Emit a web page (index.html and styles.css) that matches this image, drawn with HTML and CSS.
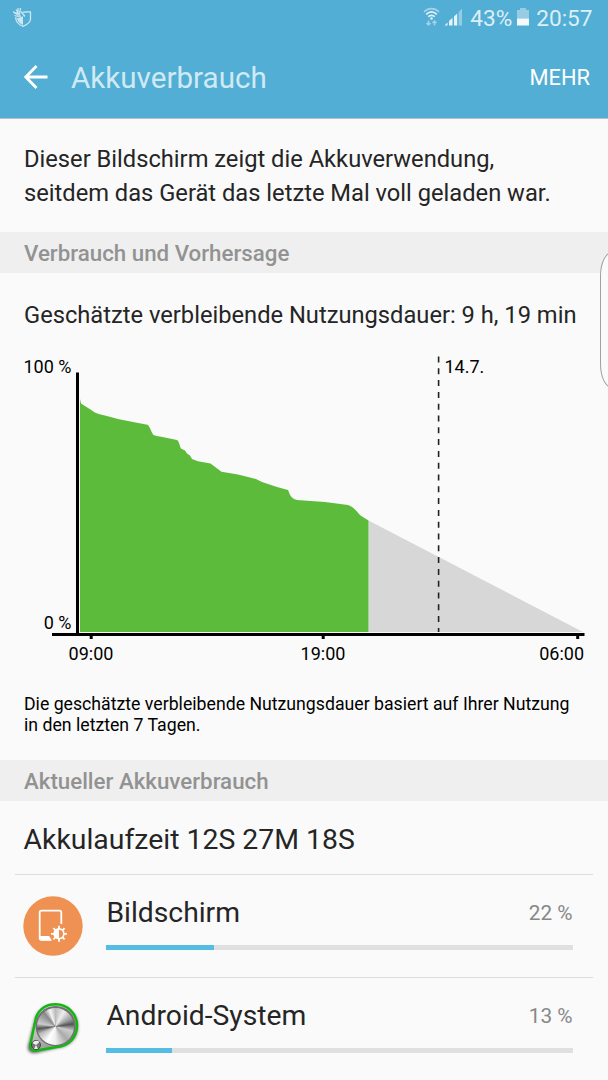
FILE: index.html
```
<!DOCTYPE html>
<html lang="de">
<head>
  <meta charset="UTF-8">
  <meta name="viewport" content="width=device-width, initial-scale=1.0">
  <title>Akkuverbrauch</title>
  <link rel="stylesheet" href="styles.css">
</head>
<body>
  <div class="screen">
    <header class="header">
      <div class="status-bar">
        <svg class="shield-icon" width="20" height="20" viewBox="0 0 20 20" fill="none" stroke="#cbe7f2">
          <path d="M10 4.2C12.500 4.200 15 3.500 17.500 4V11C17.300 14.500 14 16.800 10 18.300C6 16.800 3.200 14.500 2.800 10.500V9" stroke-width="1.300"/>
          <path d="M4 10H7L10 8V17C6.500 15.500 4.300 13.500 4 10Z" fill="#cbe7f2" stroke="none"/>
          <path d="M0 3.500L5.500 7.500M3 1.500L7.500 8.500M7.500 0L6.500 6M1.500 7.500L8.500 9.500M8 3.500L12 8.500M1 5H5M5 0V4" stroke-width="1.300"/>
        </svg>
        <div class="status-right">
          <svg class="wifi-icon" width="18" height="20" viewBox="0 0 18 20" fill="none" stroke="#e3f2f8">
            <path d="M1 4.800C5.500 .6 11.500 .6 16 4.800" stroke="#a4d3e7" stroke-width="1.600"/>
            <path d="M3.200 7.300C6.500 4.300 10.500 4.300 13.800 7.300M5.200 9.700C7.500 7.800 9.500 7.800 11.800 9.700" stroke-width="1.600"/>
            <circle cx="8.500" cy="11.500" r="1.300" fill="#e3f2f8" stroke="none"/>
            <path d="M5.500 13.500V18M3.500 16L5.500 18L7.500 16M11.500 18.500V14M9.500 16L11.500 14L13.500 16" stroke="#a4d3e7" stroke-width="1.500"/>
          </svg>
          <svg class="signal-icon" width="19" height="18" viewBox="0 0 19 18">
            <path d="M0.500 17.500L3.500 14.500V17.500ZM5 13L8.500 9.700V17.500H5ZM10 8.500L13.200 5.500V17.500H10Z" fill="#e6f3f9"/>
            <path d="M14.700 4L18 .7V17.500H14.700Z" fill="#96cce3"/>
          </svg>
          <span>43%</span>
          <svg class="battery-icon" width="12" height="18" viewBox="0 0 12 18">
            <path d="M0 2H3V0H9V2H12V10.500H0Z" fill="#97cce3"/>
            <path d="M0 10.500H12V17.500H0Z" fill="#f4fafc"/>
          </svg>
          <span>20:57</span>
        </div>
      </div>
      <div class="toolbar">
        <svg class="back-icon" width="24" height="24" viewBox="0 0 24 24" fill="none" stroke="#fff" stroke-width="2.800">
          <path d="M23.500 12H2.500M12.500 1L1.800 12L12.500 23"/>
        </svg>
        <h1>Akkuverbrauch</h1>
        <span class="more">MEHR</span>
      </div>
    </header>

    <p class="intro">Dieser Bildschirm zeigt die Akkuverwendung,<br>seitdem das Gerät das letzte Mal voll geladen war.</p>

    <h2>Verbrauch und Vorhersage</h2>
    <p class="estimate">Geschätzte verbleibende Nutzungsdauer: 9 h, 19 min</p>

    <svg class="chart" width="608" height="340" viewBox="0 340 608 340">
      <!-- forecast -->
      <path d="M368.500 520.500L583 632H368.500Z" fill="#d7d7d7"/>
      <!-- usage so far -->
      <path d="M80 632V399L81 403.500L92 410.500C95 413 99 414.200 104 415.300L118 419L133 422L147.500 424.800C149.500 426 150.500 430 153 434.500C154 435.700 157 436 160 436.500L177 440C179.500 442 179.500 446 181 448.500L185 450.500L187 453.500L190 455.500L192 459L198 461.300L210.500 463.500L221.500 471.800L238 474.500L256 479L262 482L277 487L288 490C290 494 290 498 297 500L325 502L348 505C354 507 357 512 360.500 515.500L368.500 520.500V632Z" fill="#5dbb3b"/>
      <path d="M438.600 356.500V632" class="date-line"/>
      <path d="M77.500 372.500V634" class="axis"/>
      <path d="M52 634.500H584.500" class="axis"/>
      <path d="M91.200 636V639M323.200 636V639M577.700 636V639" class="axis"/>
      <text x="71.500" y="372.500" text-anchor="end">100 %</text>
      <text x="71.500" y="629" text-anchor="end">0 %</text>
      <text x="444.500" y="372.500">14.7.</text>
      <text x="91" y="660" text-anchor="middle">09:00</text>
      <text x="323" y="660" text-anchor="middle">19:00</text>
      <text x="584" y="660" text-anchor="end">06:00</text>
    </svg>

    <p class="note">Die geschätzte verbleibende Nutzungsdauer basiert auf Ihrer Nutzung<br>in den letzten 7 Tagen.</p>

    <h2>Aktueller Akkuverbrauch</h2>
    <div class="runtime">Akkulaufzeit 12S 27M 18S</div>

    <ul class="usage-list">
      <li class="usage-item">
        <svg class="app-icon" width="60" height="60" viewBox="0 0 60 60">
          <circle cx="30" cy="30" r="29.700" fill="#ef9152"/>
          <path d="M28 43.800H18.500Q16.700 43.800 16.700 42V16.500Q16.700 14.700 18.500 14.700H36.500Q38.300 14.700 38.300 16.500V28" fill="none" stroke="#fff" stroke-width="1.800"/>
          <path d="M16.500 40H26L29 44.400H18.500Q16.500 44.400 16.500 42.500Z" fill="#fff"/>
          <path d="M36 29.800V45.800M28 37.800H44M30.400 32.200L41.600 43.400M30.400 43.400L41.600 32.200" stroke="#fff" stroke-width="1.800"/>
          <circle cx="36" cy="37.800" r="4.900" fill="#ef9152" stroke="#fff" stroke-width="1.600"/>
          <path d="M36 33V42.600A4.800 4.800 0 0 1 36 33Z" fill="#fff"/>
        </svg>
        <div class="usage-info">
          <div class="usage-title"><span class="app-name">Bildschirm</span><span class="percent">22 %</span></div>
          <div class="bar"><div class="bar-fill" style="width: 23%"></div></div>
        </div>
      </li>
      <li class="usage-item">
        <div class="app-icon system-icon">
          <svg width="60" height="60" viewBox="0 0 60 60">
            <defs>
              <linearGradient id="plate" x1="0" y1="0" x2="1" y2="1">
                <stop offset="0" stop-color="#e8e8e8"/>
                <stop offset="1" stop-color="#777"/>
              </linearGradient>
              <filter id="shadow" x="-20%" y="-20%" width="140%" height="140%">
                <feGaussianBlur stdDeviation="1.800"/>
              </filter>
            </defs>
            <path d="M12 19C16 9 24 6 33 6C45 6 55 15 55 27C55 40 46 48 34 49L13 54C7 55 3 51 5.500 45Z" fill="#222" opacity=".7" filter="url(#shadow)"/>
            <path d="M13 18.500C16.500 10 23.500 5.300 32.500 5.300C45 5.300 54 15 54 26.500C54 38 46 47 34 48L13 51.500C9 52 6.600 49 7.500 45Z" fill="url(#plate)" stroke="#10b810" stroke-width="2.400"/>
            <circle cx="32.500" cy="27" r="20" fill="#707070"/>
            <circle cx="13" cy="46" r="4.500" fill="#777" stroke="#444"/>
            <path d="M9.500 44L13 46L16.500 43A4.500 4.500 0 0 0 9.500 44ZM13 46L11 50H15Z" fill="#eee"/>
          </svg>
          <span class="knob"></span>
        </div>
        <div class="usage-info">
          <div class="usage-title"><span class="app-name">Android-System</span><span class="percent">13 %</span></div>
          <div class="bar"><div class="bar-fill" style="width: 14%"></div></div>
        </div>
      </li>
    </ul>

    <div class="edge-handle"></div>
  </div>
</body>
</html>
```
FILE: styles.css
```
* {
  box-sizing: border-box;
}

body {
  margin: 0;
  background-color: #fafafa;
  color: #252525;
  font-family: Roboto, sans-serif;
}

h1, h2, p, ul {
  margin: 0;
  padding: 0;
  font-weight: 400;
}

svg {
  display: block;
  flex-shrink: 0;
}

.screen {
  position: relative;
  width: 608px;
  height: 1080px;
  overflow: hidden;
}

.header {
  height: 119px;
  background-color: #52aed4;
  border-bottom: 1px solid #b5bfd1;
}

.status-bar {
  display: flex;
  justify-content: space-between;
  height: 36px;
  padding: 0 15.5px 0 13px;
  color: #dceff7;
  font-size: 22.6px;
  line-height: 37px;
}

.shield-icon {
  margin-top: 8px;
}

.status-right {
  display: flex;
}

.wifi-icon {
  margin: 7px 3px 0 0;
}

.signal-icon {
  margin: 8px 7px 0 0;
}

.battery-icon {
  margin: 8px 7.5px 0 4.5px;
}

.toolbar {
  display: flex;
  align-items: center;
  height: 82px;
  padding: 0 18px 0 24px;
}

.toolbar h1 {
  flex: 1;
  margin: 2px 0 0 23px;
  color: #d0eaf4;
  font-size: 29.6px;
}

.more {
  margin-top: 1px;
  color: #fff;
  font-size: 21.8px;
}

.intro {
  height: 113px;
  padding: 23px 24px 0;
  font-size: 23.7px;
  line-height: 34px;
}

h2 {
  height: 41px;
  padding-left: 24px;
  background-color: #efefef;
  color: #929292;
  font-size: 22.3px;
  font-weight: 500;
  line-height: 43px;
}

.estimate {
  height: 67px;
  padding-left: 24px;
  font-size: 23.7px;
  line-height: 84px;
  white-space: nowrap;
}

.chart text {
  fill: #000;
  font-size: 18px;
}

.axis {
  fill: none;
  stroke: #000;
  stroke-width: 3;
}

.date-line {
  stroke: #222;
  stroke-width: 1.6;
  stroke-dasharray: 6 5.8;
}

.note {
  height: 80px;
  padding: 14px 24px 0;
  color: #000;
  font-size: 17.7px;
  line-height: 20.5px;
  white-space: nowrap;
}

.runtime {
  height: 74px;
  margin: 0 15px;
  padding-left: 8.5px;
  border-bottom: 1px solid #dcdcdc;
  font-size: 28.4px;
  line-height: 78px;
}

.usage-list {
  margin: 0 15px;
  list-style: none;
}

.usage-item {
  display: flex;
  height: 103px;
  padding: 21px 20.5px 0 8px;
  border-bottom: 1px solid #dcdcdc;
}

.app-icon {
  width: 60px;
  height: 60px;
}

.usage-info {
  flex: 1;
  margin-left: 23.4px;
}

.usage-title {
  display: flex;
  justify-content: space-between;
  height: 49px;
  line-height: 34px;
}

.app-name {
  font-size: 28.3px;
}

.percent {
  color: #888;
  font-size: 20.8px;
}

.bar {
  height: 5px;
  background-color: #e0e0e0;
}

.bar-fill {
  height: 5px;
  background-color: #55bce3;
}

.system-icon {
  position: relative;
}

/* brushed metal disc on top of the icon plate */
.knob {
  position: absolute;
  top: 8.5px;
  left: 14px;
  width: 37px;
  height: 37px;
  border-radius: 50%;
  background: conic-gradient(#bbb, #eee 30deg, #999 65deg, #555 82deg, #ccc 105deg, #aaa 140deg, #eee 180deg, #fff 210deg, #bbb 245deg, #555 263deg, #ccc 280deg, #888 320deg, #f5f5f5 340deg, #bbb);
}

/* handle of the edge panel, cut off by the right screen border */
.edge-handle {
  position: absolute;
  top: 252px;
  right: -16px;
  width: 24px;
  height: 136px;
  background-color: #fafafa;
  border: 1px solid #a0a0a0;
  border-radius: 12px / 24px;
}
```
